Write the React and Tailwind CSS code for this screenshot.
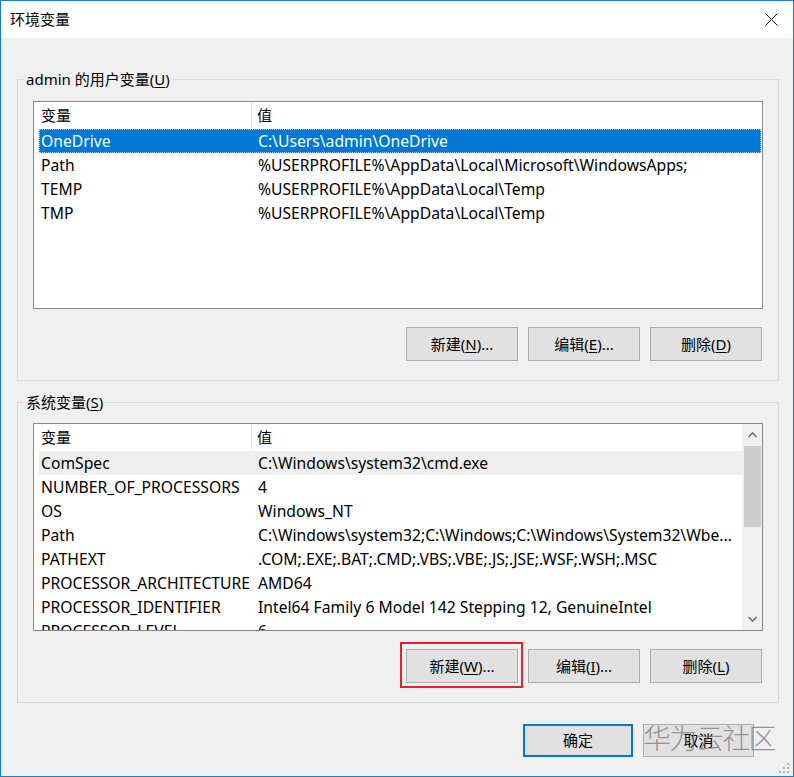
import React from 'react';

const userVars = [
  ['OneDrive', 'C:\\Users\\admin\\OneDrive'],
  ['Path', '%USERPROFILE%\\AppData\\Local\\Microsoft\\WindowsApps;'],
  ['TEMP', '%USERPROFILE%\\AppData\\Local\\Temp'],
  ['TMP', '%USERPROFILE%\\AppData\\Local\\Temp'],
];

const sysVars = [
  ['ComSpec', 'C:\\Windows\\system32\\cmd.exe'],
  ['NUMBER_OF_PROCESSORS', '4'],
  ['OS', 'Windows_NT'],
  ['Path', 'C:\\Windows\\system32;C:\\Windows;C:\\Windows\\System32\\Wbe...'],
  ['PATHEXT', '.COM;.EXE;.BAT;.CMD;.VBS;.VBE;.JS;.JSE;.WSF;.WSH;.MSC'],
  ['PROCESSOR_ARCHITECTURE', 'AMD64'],
  ['PROCESSOR_IDENTIFIER', 'Intel64 Family 6 Model 142 Stepping 12, GenuineIntel'],
  ['PROCESSOR_LEVEL', '6'],
];

function Key({ k }) {
  return <span className="underline underline-offset-[2px]">{k}</span>;
}

function Btn({ label, k, dots, className = '' }) {
  return (
    <button
      type="button"
      className={`w-[112px] h-[34px] bg-[#e1e1e1] border border-[#adadad] text-[15px] text-black flex items-center justify-center ${className}`}
    >
      {label}(<Key k={k} />){dots ? '...' : ''}
    </button>
  );
}

function ListHeader() {
  return (
    <div className="flex h-[27px] items-center bg-white">
      <div className="w-[213px] pl-[2px] h-full flex items-center border-r border-[#e5e5e5]">变量</div>
      <div className="pl-[5px]">值</div>
    </div>
  );
}

function Row({ name, value, state }) {
  let cls = 'text-black border border-transparent';
  if (state === 'selected') cls = 'bg-[#0078d7] text-white border border-dotted border-[#9cc6ee]';
  if (state === 'inactive') cls = 'bg-[#efefef] text-black border border-transparent';
  return (
    <div className={`flex h-[24px] items-center pt-[2px] whitespace-nowrap text-[15.7px] ${cls}`}>
      <div className="w-[217px] pl-[1px] shrink-0">{name}</div>
      <div className="pl-[1px] overflow-hidden">{value}</div>
    </div>
  );
}

function Chevron({ down }) {
  return (
    <svg width="9" height="6" viewBox="0 0 9 6" className={down ? 'rotate-180' : ''}>
      <path d="M0.5 5 L4.5 1 L8.5 5" fill="none" stroke="#606060" strokeWidth="1.3" />
    </svg>
  );
}

function GroupBox({ label, k, pt, children }) {
  return (
    <fieldset className="w-[762px] border border-[#d9d9d9] p-0 m-0">
      <legend className="ml-[6px] px-[2px] h-[20px] leading-[20px] text-[15px]">
        {label}(<Key k={k} />)
      </legend>
      <div className={`pl-[15px] pr-[15px] pb-[19px] ${pt}`}>{children}</div>
    </fieldset>
  );
}

export default function App() {
  return (
    <div className="w-[794px] h-[777px] border border-[#1a7fd4] bg-[#f0f0f0] flex flex-col font-['Noto_Sans','Noto_Sans_CJK_SC',sans-serif] text-[15px] text-black overflow-hidden">
      <div className="h-[37px] bg-white flex items-center justify-between pl-[9px] pr-[15px] shrink-0">
        <span className="text-[15px]">环境变量</span>
        <svg width="13" height="13" viewBox="0 0 13 13">
          <path d="M0.5 0.5 L12.5 12.5 M12.5 0.5 L0.5 12.5" stroke="#111" strokeWidth="1" />
        </svg>
      </div>

      <div className="flex-1 flex flex-col pl-[16px]">
        <div className="mt-[31px]">
          <GroupBox label="admin 的用户变量" k="U" pt="pt-[12px]">
            <div className="h-[208px] border border-[#828790] bg-white pl-[5px] pr-[1px]">
              <ListHeader />
              {userVars.map(([n, v], i) => (
                <Row key={n} name={n} value={v} state={i === 0 ? 'selected' : null} />
              ))}
            </div>
            <div className="flex justify-end gap-[10px] mt-[18px] mr-[1px]">
              <Btn label="新建" k="N" dots />
              <Btn label="编辑" k="E" dots />
              <Btn label="删除" k="D" />
            </div>
          </GroupBox>
        </div>

        <div className="mt-[11px]">
          <GroupBox label="系统变量" k="S" pt="pt-[11px]">
            <div className="h-[208px] border border-[#828790] bg-white flex overflow-hidden">
              <div className="flex-1 pl-[5px] overflow-hidden">
                <ListHeader />
                {sysVars.map(([n, v], i) => (
                  <Row key={n} name={n} value={v} state={i === 0 ? 'inactive' : null} />
                ))}
              </div>
              <div className="w-[20px] bg-[#f0f0f0] flex flex-col items-center shrink-0">
                <div className="h-[22px] flex items-center justify-center">
                  <Chevron />
                </div>
                <div className="w-[17px] h-[81px] bg-[#cdcdcd]" />
                <div className="flex-1" />
                <div className="h-[22px] flex items-center justify-center">
                  <Chevron down />
                </div>
              </div>
            </div>
            <div className="flex justify-end gap-[10px] mt-[18px] mr-[1px]">
              <div className="relative">
                <Btn label="新建" k="W" dots />
                <div className="absolute left-[-6px] right-[-5px] top-[-7px] bottom-[-5px] border-2 border-[#e2232c]" />
              </div>
              <Btn label="编辑" k="I" dots />
              <Btn label="删除" k="L" />
            </div>
          </GroupBox>
        </div>

        <div className="relative flex justify-end gap-[10px] mt-[21px] mr-[39px]">
          <button
            type="button"
            className="w-[110px] h-[33px] bg-[#e1e1e1] border-2 border-[#0078d7] text-[15px] flex items-center justify-center"
          >
            确定
          </button>
          <button
            type="button"
            className="w-[111px] h-[33px] bg-[#e1e1e1] border border-[#adadad] text-[15px] flex items-center justify-center"
          >
            取消
          </button>
          <div className="absolute left-[626px] top-[-4px] text-[28px] leading-[36px] tracking-[-1.6px] font-light text-[#6f6f6f]/70 pointer-events-none whitespace-nowrap">
            华为云社区
          </div>
        </div>
        <div className="flex-1 flex justify-end items-end pr-[3px] pb-[2px]">
          <svg width="11" height="11" viewBox="0 0 11 11">
            <g fill="#b8b8b8">
              <rect x="8" y="0" width="2" height="2" />
              <rect x="8" y="4" width="2" height="2" />
              <rect x="4" y="4" width="2" height="2" />
              <rect x="8" y="8" width="2" height="2" />
              <rect x="4" y="8" width="2" height="2" />
              <rect x="0" y="8" width="2" height="2" />
            </g>
          </svg>
        </div>
      </div>
    </div>
  );
}
